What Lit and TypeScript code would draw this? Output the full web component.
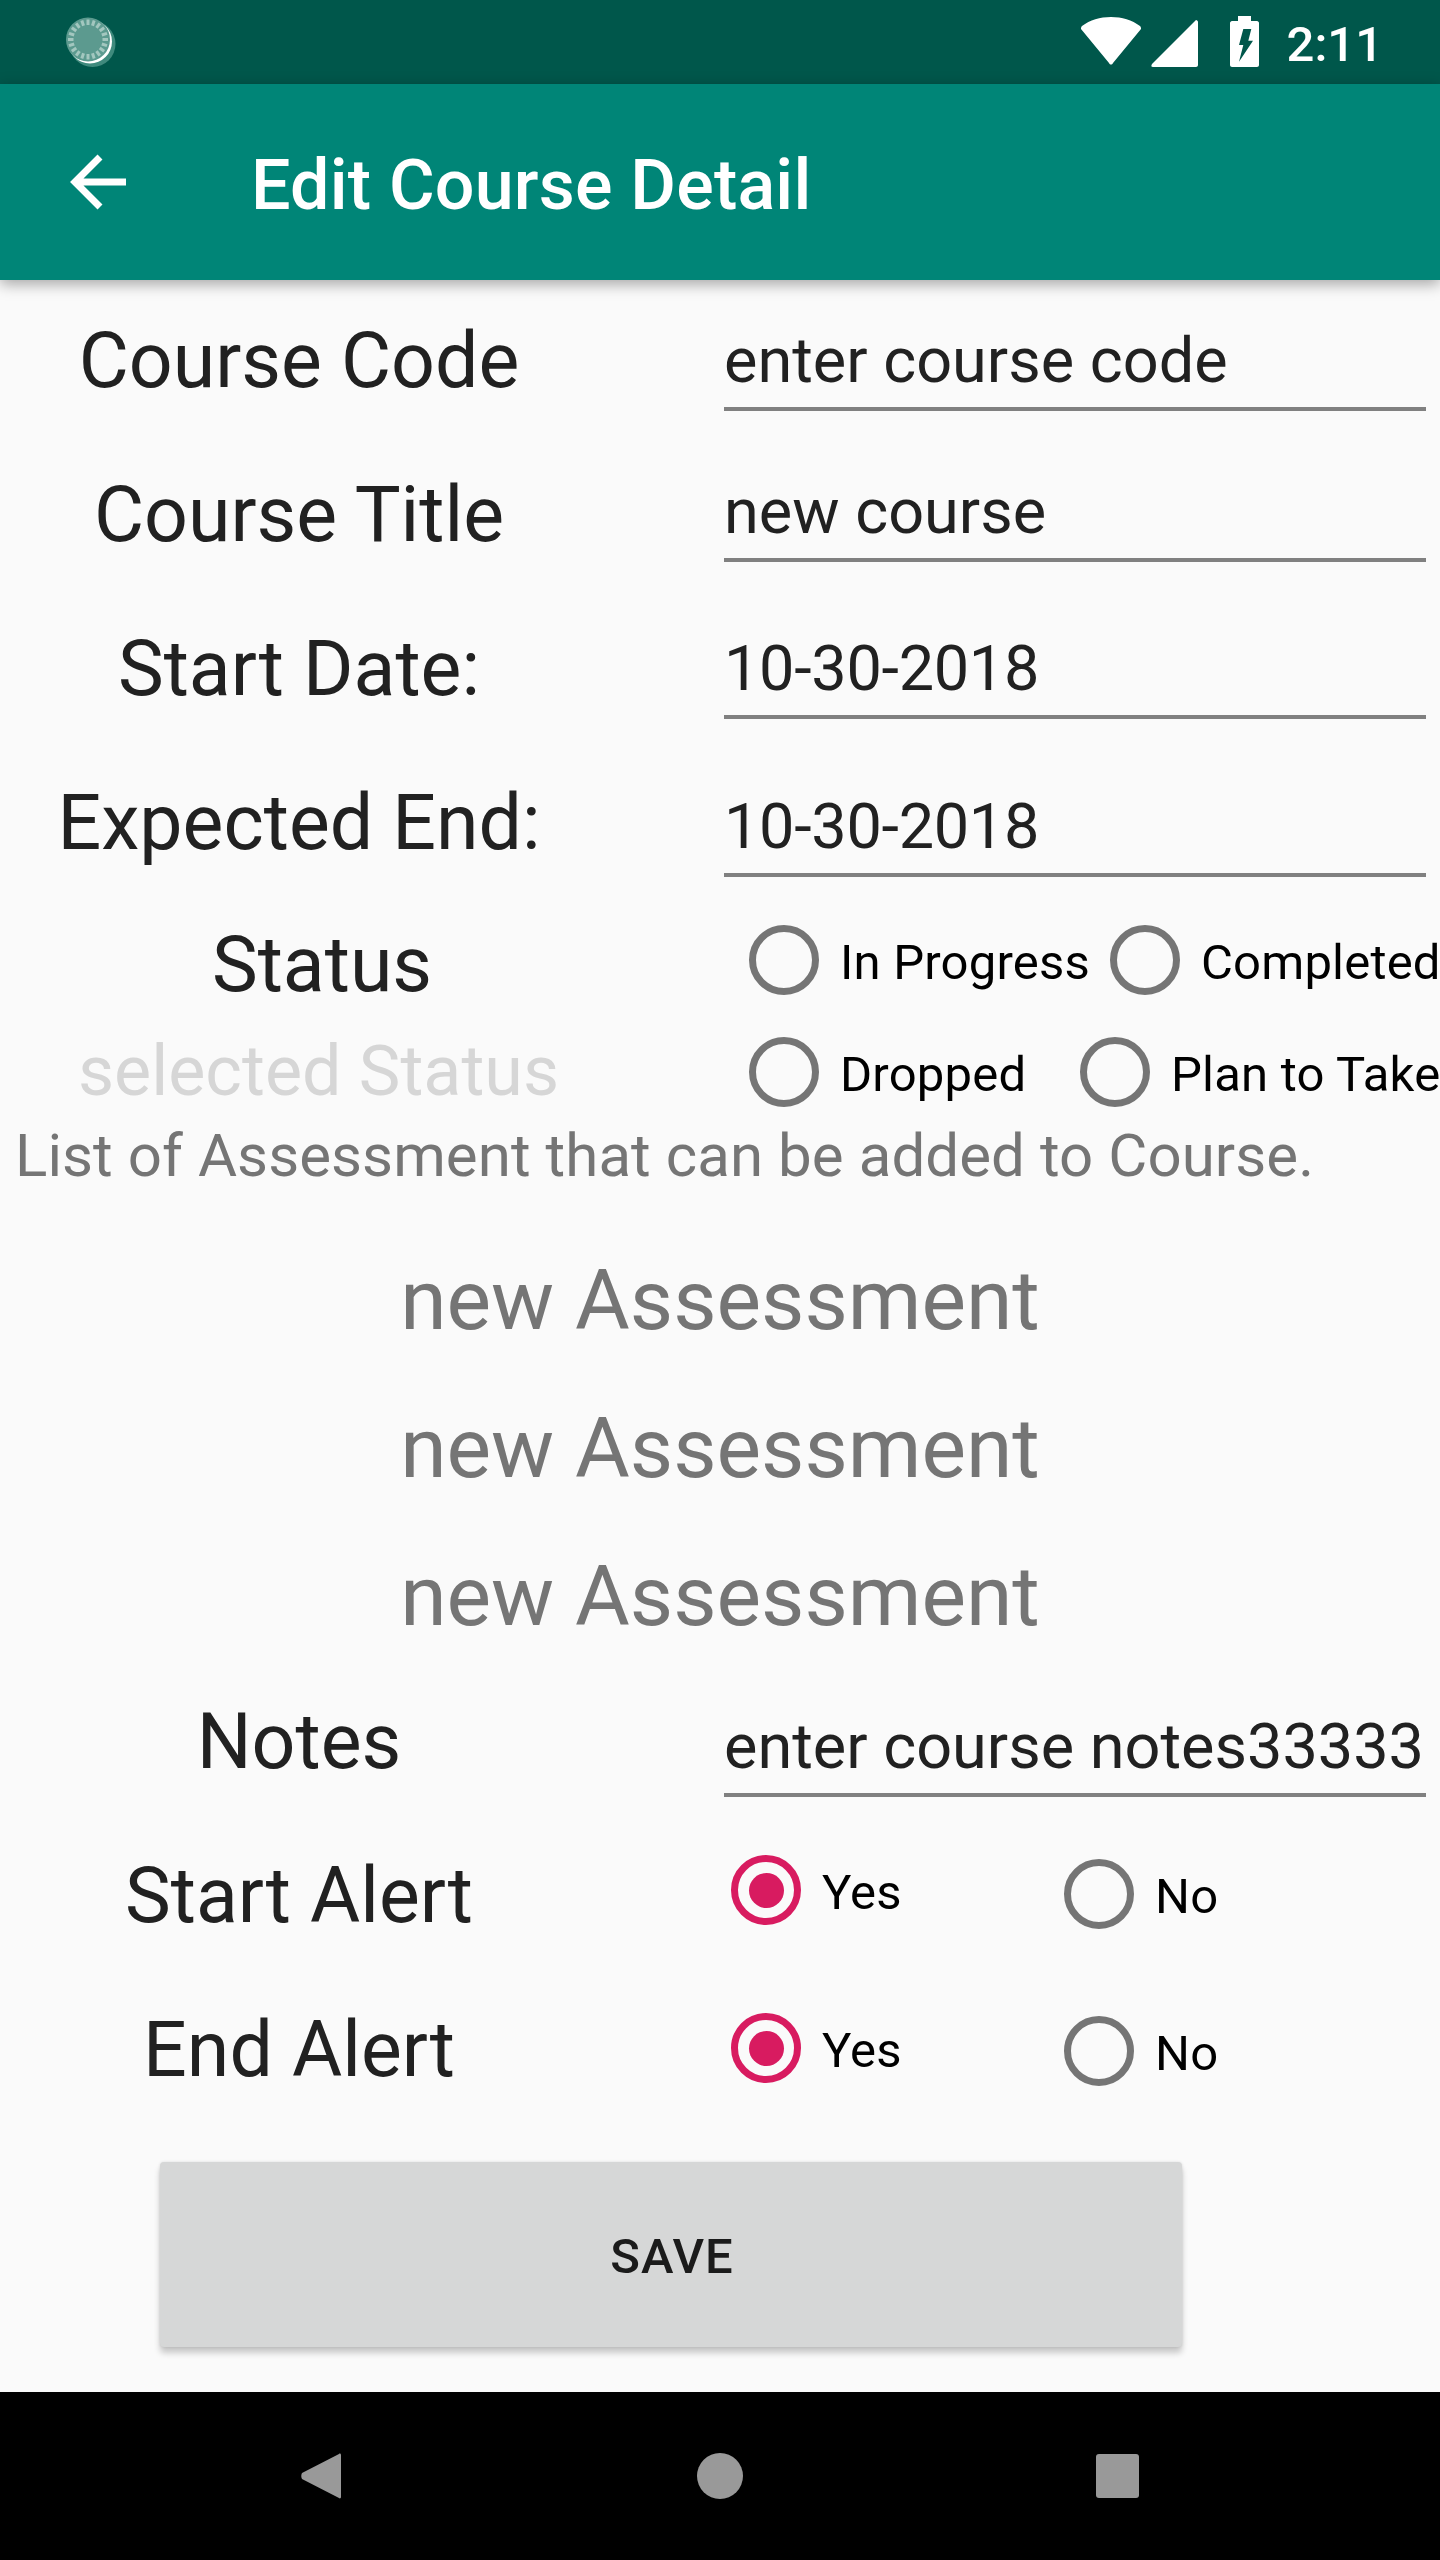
import { LitElement, html, css, svg } from "lit";
import { customElement } from "lit/decorators.js";

const radio = (on = false) => html`<span class="radio ${on ? "on" : ""}"></span>`;

@customElement("app-root")
export class AppRoot extends LitElement {
  static styles = css`
    :host { display: block; width: 1440px; height: 2560px; font-family: Roboto, sans-serif; background: #fafafa; overflow: hidden; }
    .page { display: flex; flex-direction: column; height: 2560px; }
    .status { height: 84px; background: #00574b; display: flex; align-items: flex-start; justify-content: space-between; padding: 0 57px 0 64px; flex: none; box-sizing: border-box; }
    .loader { margin-top: 15px; display: block; }
    .status-right { display: flex; align-items: flex-start; color: #fff; font-size: 49px; line-height: 58px; }
    .wifi { margin-top: 17px; display: block; }
    .signal { margin: 20px 0 0 10px; display: block; }
    .battery { margin: 16px 0 0 32px; display: block; }
    .time { margin: 16px 0 0 28px; font-weight: 500; }
    .toolbar { height: 196px; background: #008577; display: flex; align-items: center; flex: none; color: #fff; position: relative; z-index: 1; box-shadow: 0 4px 14px rgba(0,0,0,.35); }
    .back { margin-left: 70px; width: 56px; height: 56px; display: block; }
    .title { margin-left: 125px; padding-top: 6px; font-size: 70px; font-weight: 500; letter-spacing: .2px; }
    .form { flex: 1; display: flex; flex-direction: column; color: #212121; }
    .top { display: flex; height: 616px; flex: none; }
    .labels { width: 598px; flex: none; }
    .label { font-size: 77px; text-align: center; line-height: 90px; color: #212121; height: 154px; box-sizing: border-box; padding-top: 36px; }
    .fields { margin-left: 126px; width: 702px; }
    .field { box-sizing: border-box; height: 87px; padding-bottom: 9px; border-bottom: 4px solid #808080; font-size: 63px; line-height: 74px; color: #212121; white-space: nowrap; }
    .num { letter-spacing: -.3px; }
    .f1 { margin-top: 44px; }
    .f2 { margin-top: 64px; }
    .f3 { margin-top: 70px; }
    .f4 { margin-top: 71px; }
    .radio { width: 70px; height: 70px; box-sizing: border-box; border: 7px solid #757575; border-radius: 50%; display: block; flex: none; position: relative; }
    .radio.on { border-color: #d81b60; }
    .radio.on::after { content: ""; position: absolute; inset: 10.5px; border-radius: 50%; background: #d81b60; }
    .opt { display: flex; align-items: center; gap: 21px; font-size: 49px; line-height: 58px; color: #000; white-space: nowrap; letter-spacing: .2px; }
    .opt b { font-weight: 400; padding-top: 6px; }
    .w361 { width: 361px; flex: none; }
    .w331 { width: 331px; flex: none; }
    .status-row { display: flex; flex: none; }
    .s1 { height: 128px; }
    .s2 { height: 96px; }
    .status-label { width: 644px; flex: none; text-align: center; font-size: 77px; line-height: 90px; padding-top: 24px; box-sizing: border-box; }
    .selected { width: 637px; flex: none; text-align: center; font-size: 70px; line-height: 82px; padding-top: 6px; box-sizing: border-box; color: #d6d6d6; }
    .opts { display: flex; align-items: center; }
    .m105 { margin-left: 105px; }
    .m112 { margin-left: 112px; }
    .list { font-size: 60px; color: #757575; padding-left: 15px; height: 72px; line-height: 72px; margin-bottom: 34px; flex: none; white-space: nowrap; letter-spacing: .07px; }
    .assess { font-size: 84px; color: #757575; text-align: center; height: 148px; line-height: 150px; flex: none; }
    .alert { display: flex; flex: none; }
    .notes { height: 145px; }
    .notes .label { padding-top: 27px; }
    .notes .field { margin: 40px 0 0 126px; width: 702px; flex: none; }
    .a1 { height: 154px; }
    .a2 { height: 193px; }
    .alert .label { width: 598px; flex: none; }
    .yes { margin-left: 133px; width: 333px; flex: none; align-self: flex-start; }
    .no { align-self: flex-start; }
    .a1 .yes { margin-top: 40px; }
    .a1 .no { margin-top: 44px; }
    .a2 .yes { margin-top: 44px; }
    .a2 .no { margin-top: 47px; }
    .save { margin: 0 0 0 160px; width: 1022px; height: 185px; background: #d6d7d7; border: 0; border-radius: 4px; color: #1b1b1b; font: 500 49px Roboto, sans-serif; box-shadow: 0 6px 6px rgba(0,0,0,.2), 0 0 3px rgba(0,0,0,.12); display: flex; align-items: center; justify-content: center; padding: 4px 0 0 2px; letter-spacing: 1px; flex: none; }
    .nav { height: 168px; background: #000; flex: none; display: flex; align-items: center; padding-left: 301px; box-sizing: border-box; padding-bottom: 1px; }
    .nav svg { display: block; }
    .n2 { margin-left: 356px; }
    .n3 { margin-left: 353px; }
  `;

  render() {
    return html`<div class="page">
      <div class="status">
        <svg class="loader" width="54" height="54" viewBox="0 0 54 54">
          <circle cx="28.5" cy="29" r="23" fill="#3f8a7d"/>
          <circle cx="26" cy="26.5" r="22" fill="#fff"/>
          <circle cx="24" cy="24.5" r="22" fill="#5c9a8f"/>
          ${Array.from({ length: 20 }, (_, i) => svg`<line x1="24" y1="4.5" x2="24" y2="10" stroke="#a3c7bf" stroke-width="3" transform="rotate(${i * 18} 24 24.5)"/>`)}
        </svg>
        <div class="status-right">
          <svg class="wifi" width="60" height="48" viewBox="0 0 60 48" fill="#fff"><path d="M1 9C9 3 19 0 30 0s21 3 29 9c1 1 1 2 1 3L32 46c-1 2-3 2-4 0L0 12c0-1 0-2 1-3z"/></svg>
          <svg class="signal" width="47" height="47" viewBox="0 0 47 47" fill="#fff"><path d="M45 0c1 0 2 1 2 2v43c0 1-1 2-2 2H2c-2 0-2-1-1-3z"/></svg>
          <svg class="battery" width="29" height="51" viewBox="0 0 29 51"><path fill="#fff" fill-rule="evenodd" d="M8 0h13v5h6c1 0 2 1 2 2v42c0 1-1 2-2 2H2c-1 0-2-1-2-2V7c0-1 1-2 2-2h6zM13.3 13 9 29h4.3L9 45.7 23 24.7h-4.7L21.3 13z"/></svg>
          <span class="time">2:11</span>
        </div>
      </div>
      <div class="toolbar">
        <svg class="back" viewBox="0 0 56 56" fill="none" stroke="#fff" stroke-width="7"><path d="M56 28H5M30 3 5 28l25 25"/></svg>
        <div class="title">Edit Course Detail</div>
      </div>
      <div class="form">
        <div class="top">
          <div class="labels">
            <div class="label">Course Code</div>
            <div class="label">Course Title</div>
            <div class="label">Start Date:</div>
            <div class="label">Expected End:</div>
          </div>
          <div class="fields">
            <div class="field f1">enter course code</div>
            <div class="field f2">new course</div>
            <div class="field f3 num">10-30-2018</div>
            <div class="field f4 num">10-30-2018</div>
          </div>
        </div>
        <div class="status-row s1">
          <div class="status-label">Status</div>
          <div class="opts m105">
            <span class="opt w361">${radio()}<b>In Progress</b></span>
            <span class="opt">${radio()}<b>Completed</b></span>
          </div>
        </div>
        <div class="status-row s2">
          <div class="selected">selected Status</div>
          <div class="opts m112">
            <span class="opt w331">${radio()}<b>Dropped</b></span>
            <span class="opt">${radio()}<b>Plan to Take</b></span>
          </div>
        </div>
        <div class="list">List of Assessment that can be added to Course.</div>
        <div class="assess">new Assessment</div>
        <div class="assess">new Assessment</div>
        <div class="assess">new Assessment</div>
        <div class="alert notes"><div class="label">Notes</div><div class="field">enter course notes33333</div></div>
        <div class="alert a1"><div class="label">Start Alert</div>
          <span class="opt yes">${radio(true)}<b>Yes</b></span><span class="opt no">${radio()}<b>No</b></span></div>
        <div class="alert a2"><div class="label">End Alert</div>
          <span class="opt yes">${radio(true)}<b>Yes</b></span><span class="opt no">${radio()}<b>No</b></span></div>
        <button class="save">SAVE</button>
      </div>
      <div class="nav">
        <svg width="40" height="46" viewBox="0 0 40 46" fill="#999"><path d="M38 1c1-1 2 0 2 1v42c0 1-1 2-2 1L1 26c-1-2-1-4 0-6z"/></svg>
        <svg class="n2" width="46" height="46" viewBox="0 0 46 46" fill="#999"><circle cx="23" cy="23" r="23"/></svg>
        <svg class="n3" width="43" height="44" viewBox="0 0 43 44" fill="#999"><rect width="43" height="44" rx="3"/></svg>
      </div>
    </div>`;
  }
}
